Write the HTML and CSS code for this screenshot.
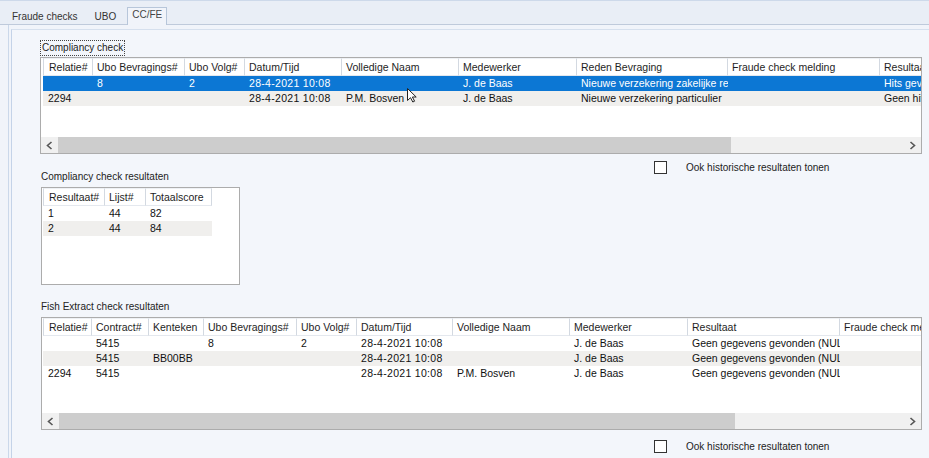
FILE: index.html
```html
<!DOCTYPE html>
<html>
<head>
<meta charset="utf-8">
<link rel="stylesheet" href="styles.css">
</head>
<body>
<div class="window">
  <div class="tabstrip">
    <span class="tab">Fraude checks</span>
    <span class="tab">UBO</span>
    <span class="tab active">CC/FE</span>
  </div>
  <div class="page">
    <div class="group">
      <div class="content">
        <div class="caption focus">Compliancy check</div>

        <div class="grid g1">
          <div class="vp">
            <table>
              <colgroup><col><col><col><col><col><col><col><col><col></colgroup>
              <thead><tr><th>Relatie#</th><th>Ubo Bevragings#</th><th>Ubo Volg#</th><th>Datum/Tijd</th><th>Volledige Naam</th><th>Medewerker</th><th>Reden Bevraging</th><th>Fraude check melding</th><th>Resultaat</th></tr></thead>
              <tbody>
                <tr class="sel"><td></td><td>8</td><td>2</td><td class="dt">28-4-2021 10:08</td><td></td><td>J. de Baas</td><td>Nieuwe verzekering zakelijke relatie</td><td></td><td>Hits gevonden</td></tr>
                <tr class="alt"><td>2294</td><td></td><td></td><td class="dt">28-4-2021 10:08</td><td>P.M. Bosven</td><td>J. de Baas</td><td>Nieuwe verzekering particulier</td><td></td><td>Geen hits gevonden</td></tr>
              </tbody>
            </table>
          </div>
          <div class="hscroll">
            <span class="sbtn"><svg width="7" height="9" viewBox="0 0 7 9"><polyline points="5.5,1 1.5,4.5 5.5,8" fill="none" stroke="#555" stroke-width="1.6"/></svg></span>
            <span class="thumb t1"></span>
            <span class="track"></span>
            <span class="sbtn"><svg width="7" height="9" viewBox="0 0 7 9"><polyline points="1.5,1 5.5,4.5 1.5,8" fill="none" stroke="#555" stroke-width="1.6"/></svg></span>
          </div>
          <svg class="cursor" width="11" height="15" viewBox="0 0 11 15"><path d="M0.5 0.5 L0.5 12.5 L3.5 9.7 L5.8 14 L7.6 13.2 L5.4 9 L9.2 9 Z" fill="#fff" stroke="#222" stroke-width="1"/></svg>
        </div>

        <div class="chkrow">
          <span class="box"></span>
          <span class="chklabel">Ook historische resultaten tonen</span>
        </div>

        <div class="caption c2">Compliancy check resultaten</div>

        <div class="grid g2">
          <div class="vp">
            <table>
              <colgroup><col><col><col></colgroup>
              <thead><tr><th>Resultaat#</th><th>Lijst#</th><th>Totaalscore</th></tr></thead>
              <tbody>
                <tr><td>1</td><td>44</td><td>82</td></tr>
                <tr class="alt"><td>2</td><td>44</td><td>84</td></tr>
              </tbody>
            </table>
          </div>
        </div>

        <div class="caption c3">Fish Extract check resultaten</div>

        <div class="grid g3">
          <div class="vp">
            <table>
              <colgroup><col><col><col><col><col><col><col><col><col><col></colgroup>
              <thead><tr><th>Relatie#</th><th>Contract#</th><th>Kenteken</th><th>Ubo Bevragings#</th><th>Ubo Volg#</th><th>Datum/Tijd</th><th>Volledige Naam</th><th>Medewerker</th><th>Resultaat</th><th>Fraude check melding</th></tr></thead>
              <tbody>
                <tr><td></td><td>5415</td><td></td><td>8</td><td>2</td><td class="dt">28-4-2021 10:08</td><td></td><td>J. de Baas</td><td>Geen gegevens gevonden (NULL)</td><td></td></tr>
                <tr class="alt"><td></td><td>5415</td><td>BB00BB</td><td></td><td></td><td class="dt">28-4-2021 10:08</td><td></td><td>J. de Baas</td><td>Geen gegevens gevonden (NULL)</td><td></td></tr>
                <tr><td>2294</td><td>5415</td><td></td><td></td><td></td><td class="dt">28-4-2021 10:08</td><td>P.M. Bosven</td><td>J. de Baas</td><td>Geen gegevens gevonden (NULL)</td><td></td></tr>
              </tbody>
            </table>
          </div>
          <div class="hscroll">
            <span class="sbtn"><svg width="7" height="9" viewBox="0 0 7 9"><polyline points="5.5,1 1.5,4.5 5.5,8" fill="none" stroke="#555" stroke-width="1.6"/></svg></span>
            <span class="thumb t3"></span>
            <span class="track"></span>
            <span class="sbtn"><svg width="7" height="9" viewBox="0 0 7 9"><polyline points="1.5,1 5.5,4.5 1.5,8" fill="none" stroke="#555" stroke-width="1.6"/></svg></span>
          </div>
        </div>

        <div class="chkrow r2">
          <span class="box"></span>
          <span class="chklabel">Ook historische resultaten tonen</span>
        </div>
      </div>
    </div>
  </div>
</div>
</body>
</html>
```
FILE: styles.css
```css
html, body {
  margin: 0;
  padding: 0;
}
body {
  width: 929px;
  height: 458px;
  overflow: hidden;
  background: #f1f4fa;
  font-family: "Liberation Sans", Arial, sans-serif;
  color: #1a1a1a;
}
.window {
  height: 458px;
  border-top: 1px solid #cdd9ea;
  display: flex;
  flex-direction: column;
  box-sizing: border-box;
}
.tabstrip {
  height: 24px;
  flex: none;
  box-sizing: border-box;
  background: #e9eef6;
  border-bottom: 1px solid #bfcadb;
  display: flex;
  align-items: flex-end;
  gap: 5px;
  padding-left: 6px;
  font-size: 10px;
}
.tab {
  height: 15px;
  line-height: 15px;
  padding: 3px 6px 0;
  color: #333;
  white-space: nowrap;
}
.tab.active {
  position: relative;
  height: auto;
  line-height: 14px;
  padding: 0 4px 3px;
  margin-bottom: -1px;
  border: 1px solid #b7c6da;
  border-bottom: none;
  background: #f1f4fa;
  color: #444;
}
.page {
  flex: 1;
  margin-left: 8px;
  border-left: 1px solid #cbd8ea;
  padding: 4px 0 0 2px;
  display: flex;
}
.group {
  flex: 1;
  border-top: 1px solid #d6e0ee;
  border-left: 1px solid #c4d3e8;
  background: #f3f6fb;
}
.content {
  padding: 10px 0 0 28px;
  display: flex;
  flex-direction: column;
  align-items: flex-start;
}
.caption {
  font-size: 10px;
  color: #222;
  white-space: nowrap;
}
.caption.focus {
  line-height: 14px;
  padding: 0 1px;
  border: 1px dotted #444;
}
.caption.c2 {
  line-height: 12px;
  margin: -3px 0 0 1px;
}
.caption.c3 {
  line-height: 12px;
  margin: 16px 0 0 1px;
}
.grid {
  position: relative;
  border: 1px solid #acacac;
  background: #fff;
  box-sizing: border-box;
  display: flex;
  flex-direction: column;
  font-size: 10.5px;
}
.vp {
  flex: 1;
  overflow: hidden;
  padding-left: 1px;
}
.g1 {
  width: 882px;
  height: 97px;
  margin-top: 1px;
}
.g1 .vp { padding-left: 2px; }
.g2 {
  width: 199px;
  height: 98px;
  margin: 4px 0 0 1px;
}
.g3 {
  width: 881px;
  height: 113px;
  margin: 4px 0 0 1px;
}
table {
  table-layout: fixed;
  border-collapse: separate;
  border-spacing: 0;
}
.g1 table { width: 937px; }
.g2 table { width: 169px; }
.g3 table { width: 917px; }
.g1 col:nth-child(1) { width: 50px; }
.g1 col:nth-child(2) { width: 92px; }
.g1 col:nth-child(3) { width: 60px; }
.g1 col:nth-child(4) { width: 97px; }
.g1 col:nth-child(5) { width: 117px; }
.g1 col:nth-child(6) { width: 118px; }
.g1 col:nth-child(7) { width: 151px; }
.g1 col:nth-child(8) { width: 152px; }
.g1 col:nth-child(9) { width: 100px; }
.g2 col:nth-child(1) { width: 62px; }
.g2 col:nth-child(2) { width: 41px; }
.g2 col:nth-child(3) { width: 66px; }
.g3 col:nth-child(1) { width: 49px; }
.g3 col:nth-child(2) { width: 57px; }
.g3 col:nth-child(3) { width: 55px; }
.g3 col:nth-child(4) { width: 93px; }
.g3 col:nth-child(5) { width: 60px; }
.g3 col:nth-child(6) { width: 96px; }
.g3 col:nth-child(7) { width: 117px; }
.g3 col:nth-child(8) { width: 118px; }
.g3 col:nth-child(9) { width: 152px; }
.g3 col:nth-child(10) { width: 120px; }
th, td {
  padding: 0 0 0 4px;
  text-align: left;
  white-space: nowrap;
  overflow: hidden;
  font-weight: normal;
}
th {
  height: 18px;
  box-sizing: border-box;
  line-height: 16px;
  background: #fff;
  color: #1e1e1e;
  border-right: 1px solid #d3d9e1;
  border-bottom: 1px solid #e4e8ee;
  border-top: 1px solid #eef1f5;
}
th:first-child {
  border-left: 1px solid #d3d9e1;
  padding-left: 5px;
}
td {
  height: 15px;
  line-height: 15px;
  color: #111;
}
td:first-child { padding-left: 5px; }
td.dt { letter-spacing: 0.3px; }
tr.alt td { background: #f0efed; }
tr.sel td {
  background: #0c77d4;
  color: #fff;
}
.hscroll {
  height: 16px;
  display: flex;
  background: #f0f0f0;
  flex: none;
}
.sbtn {
  width: 17px;
  display: flex;
  align-items: center;
  justify-content: center;
}
.thumb {
  background: #cdcdcd;
}
.t1 { width: 673px; }
.t3 { width: 676px; }
.track { flex: 1; }
.cursor {
  position: absolute;
  left: 366px;
  top: 30px;
}
.chkrow {
  display: flex;
  align-items: center;
  height: 13px;
  margin: 7px 0 0 614px;
}
.chkrow.r2 {
  margin-top: 10px;
}
.box {
  width: 13px;
  height: 13px;
  box-sizing: border-box;
  border: 1px solid #333;
  background: #fff;
  margin-right: 19px;
}
.chklabel {
  font-size: 10px;
  line-height: 13px;
  color: #222;
  white-space: nowrap;
}
```
